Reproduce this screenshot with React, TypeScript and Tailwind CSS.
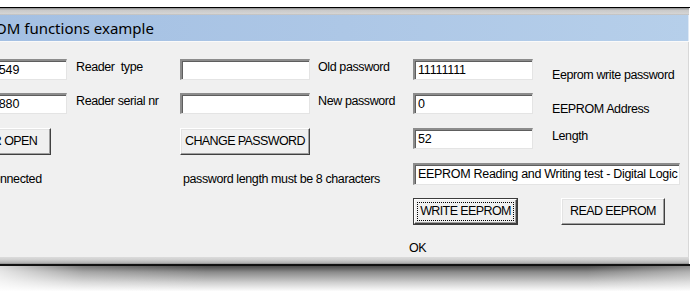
import React from "react";

const FONT = "font-['Liberation_Sans',Arial,sans-serif]";

function Box({ className, children, wide }: { className: string; children?: React.ReactNode; wide?: boolean }) {
  return (
    <div
      className={
        "h-[21px] shrink-0 bg-white border-t-2 border-l-2 border-t-[#8c8c8c] border-l-[#8c8c8c] border-b border-r border-b-[#e4e4e4] border-r-[#e4e4e4] shadow-[inset_1px_1px_0_#5e5e5e] pl-[3px] text-[12.5px] leading-[19px] text-black overflow-hidden whitespace-nowrap " +
        (wide ? "tracking-[-0.3px] " : "tracking-[-0.15px] ") +
        className
      }
    >
      {children}
    </div>
  );
}

function Btn({ className, children }: { className: string; children: React.ReactNode }) {
  return (
    <div
      className={
        "h-[27px] shrink-0 bg-[#f0f0f0] border border-t-white border-l-white border-b-[#404040] border-r-[#404040] shadow-[inset_-1px_-1px_0_#a0a0a0,inset_1px_1px_0_#e3e3e3] flex items-center justify-center text-[12.5px] tracking-[-0.6px] text-black whitespace-nowrap overflow-hidden " +
        className
      }
    >
      {children}
    </div>
  );
}

function Label({ className, children }: { className: string; children: React.ReactNode }) {
  return (
    <div className={"shrink-0 text-[12.5px] tracking-[-0.4px] leading-[16px] text-black whitespace-nowrap " + className}>
      {children}
    </div>
  );
}

export default function App() {
  return (
    <div className={"w-[690px] h-[296px] bg-white overflow-hidden flex flex-col " + FONT}>
      <div className="h-[7px] shrink-0 bg-white" />
      <div className="h-[1px] shrink-0 bg-black" />
      <div className="h-[7px] shrink-0 bg-[linear-gradient(to_bottom,#8a8a8a,#c9c9c9_30%,#d4d4d4_80%,#bcbcbc)] w-[689px]" />
      {/* title bar */}
      <div className="h-[26px] shrink-0 w-[689px] bg-[linear-gradient(to_right,#a4c0e3,#adc7e6_50%,#b6cfea)] border-r border-r-[#dfe9f5] flex items-center">
        <div className="w-0 flex justify-end -ml-[5px]">
          <span className="font-['Noto_Sans','Liberation_Sans',sans-serif] text-[15px] text-black">EEPR</span>
        </div>
        <span className="font-['Noto_Sans','Liberation_Sans',sans-serif] text-[15px] text-black whitespace-nowrap">OM functions example</span>
      </div>
      <div className="h-[1px] shrink-0 w-[689px] bg-[#fafafa]" />
      {/* body */}
      <div className="h-[215px] shrink-0 w-[689px] bg-[#f0f0f0] border-r border-r-[#d8d8d8] pt-[17px] flex flex-col overflow-hidden">
        {/* row 1 */}
        <div className="flex items-start h-[21px]">
          <Box className="-ml-[13px] w-[80px]">1549</Box>
          <Label className="ml-[9px] w-[104px]">Reader&nbsp; type</Label>
          <Box className="w-[130px]" />
          <Label className="ml-[8px] w-[95px]">Old password</Label>
          <Box className="w-[120px]">11111111</Box>
          <Label className="ml-[19px] mt-[8px]">Eeprom write password</Label>
        </div>
        {/* row 2 */}
        <div className="flex items-start h-[21px] mt-[13px]">
          <Box className="-ml-[13px] w-[80px]">1880</Box>
          <Label className="ml-[9px] w-[104px]">Reader serial nr</Label>
          <Box className="w-[130px]" />
          <Label className="ml-[8px] w-[95px]">New password</Label>
          <Box className="w-[120px]">0</Box>
          <Label className="ml-[19px] mt-[8px]">EEPROM Address</Label>
        </div>
        {/* row 3 */}
        <div className="flex items-start h-[27px] mt-[14px]">
          <Btn className="-ml-[61px] w-[112px]">READER OPEN</Btn>
          <Btn className="ml-[129px] w-[130px]">CHANGE PASSWORD</Btn>
          <Box className="ml-[103px] w-[120px]">52</Box>
          <Label className="ml-[19px] mt-[0px]">Length</Label>
        </div>
        {/* row 4 */}
        <div className="flex items-start h-[22px] mt-[8px]">
          <div className="w-[183px] shrink-0 flex mt-[8px] text-[12.5px] tracking-[-0.4px] leading-[16px] text-black">
            <div className="w-0 flex justify-end">
              <span className="whitespace-nowrap">Disco</span>
            </div>
            <span className="whitespace-nowrap">nnected</span>
          </div>
          <Label className="w-[230px] mt-[8px]">password length must be 8 characters</Label>
          <Box wide className="w-[267px] h-[22px]">EEPROM Reading and Writing test - Digital Logic Ltd</Box>
        </div>
        {/* row 5 */}
        <div className="flex items-start h-[27px] mt-[13px]">
          <div className="ml-[413px] w-[105px] h-[27px] shrink-0 border border-[#3c3c3c] flex">
            <div className="flex-1 bg-[#f0f0f0] border border-t-white border-l-white border-b-[#404040] border-r-[#404040] shadow-[inset_-1px_-1px_0_#a0a0a0] flex items-center justify-center p-[2px]">
              <div className="w-full h-full border border-dotted border-black flex items-center justify-center text-[12.5px] tracking-[-0.6px] text-black whitespace-nowrap">
                WRITE EEPROM
              </div>
            </div>
          </div>
          <Btn className="ml-[43px] w-[104px]">READ EEPROM</Btn>
        </div>
        {/* row 6 */}
        <div className="flex mt-[15px]">
          <Label className="ml-[409px]">OK</Label>
        </div>
      </div>
      {/* bottom frame */}
      <div className="h-[7px] shrink-0 w-[689px] bg-[linear-gradient(to_bottom,#dcdcdc,#cfcfcf_40%,#b4b4b4_80%,#8c8c8c)]" />
      <div className="h-[2px] shrink-0 w-[690px] bg-[#111]" />
      <div className="h-[30px] shrink-0 w-[690px] bg-[image:linear-gradient(to_right,rgba(255,255,255,0.8),rgba(255,255,255,0.25)_12%,transparent_30%,transparent_85%,rgba(255,255,255,0.35)),linear-gradient(to_bottom,#4a4a4a,#8a8a8a_20%,#cfcfcf_55%,#ffffff_85%)]" />
    </div>
  );
}
